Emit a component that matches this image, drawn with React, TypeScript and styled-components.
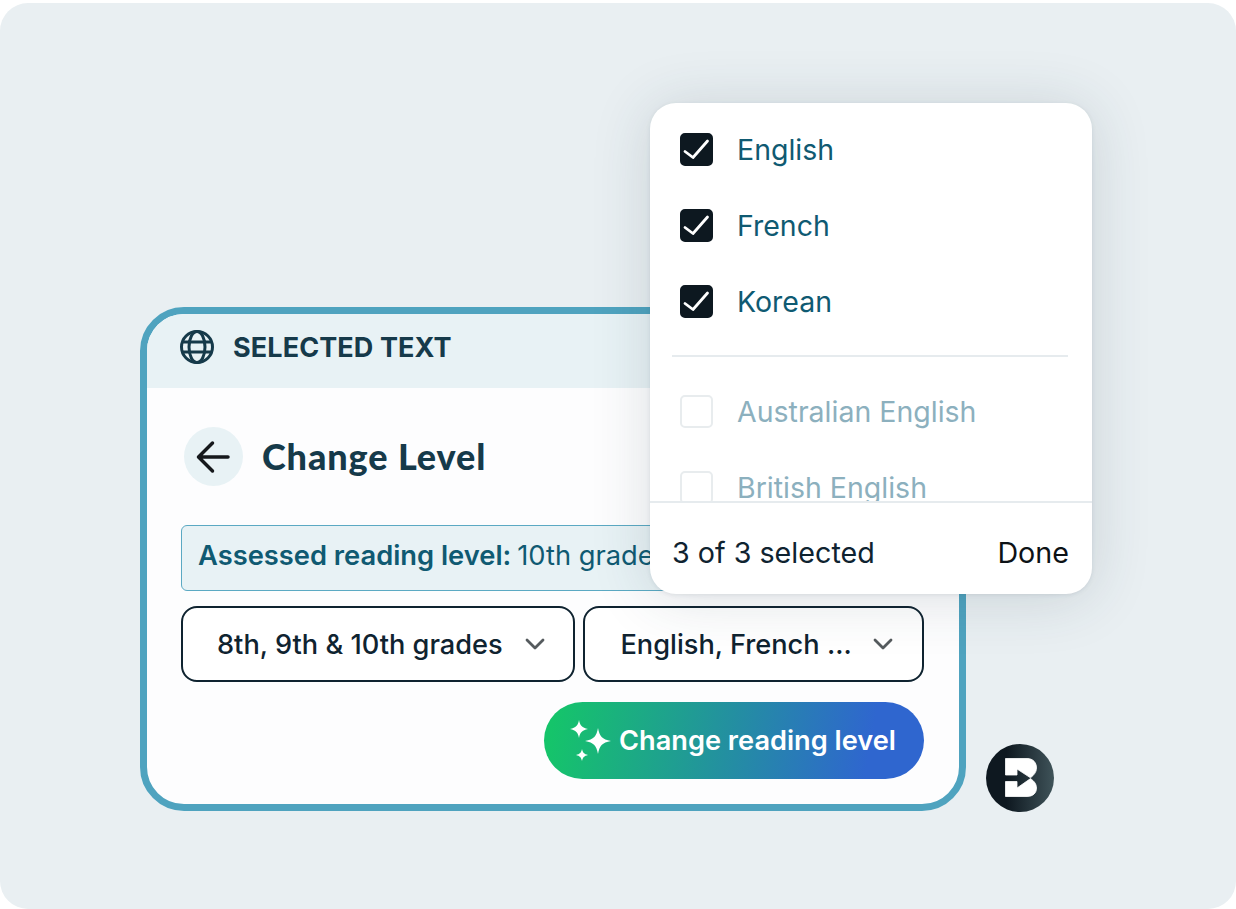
import { createGlobalStyle } from "styled-components";
import styled from "styled-components";

const GlobalStyle = createGlobalStyle`
  html, body {
    margin: 0;
    background: #fff;
  }

  body {
    font-family: Inter, "Liberation Sans", sans-serif;
  }
`;

const Page = styled.div`
  width: 1236px;
  height: 909px;
  overflow: hidden;
  padding-top: 3px;
  box-sizing: border-box;
`;

const Panel = styled.div`
  position: relative;
  height: 906px;
  background: #e9eff2;
  border-radius: 28px;
  padding: 304px 0 0 140px;
  box-sizing: border-box;
`;

const Card = styled.section`
  width: 826px;
  height: 504px;
  box-sizing: border-box;
  border: 7px solid #4fa3bf;
  border-radius: 44px;
  background: #fdfdfe;
  overflow: hidden;
`;

const CardHeader = styled.header`
  height: 74px;
  background: #e8f2f5;
  display: flex;
  align-items: center;
  gap: 18px;
  padding: 0 0 8px 32px;
  box-sizing: border-box;
  color: #163a4a;
`;

const HeaderTitle = styled.h2`
  margin: 0;
  font-size: 27px;
  font-weight: 700;
  letter-spacing: 0.1px;
`;

const CardBody = styled.div`
  padding: 39px 35px 0 34px;
`;

const TitleRow = styled.div`
  display: flex;
  align-items: center;
  gap: 19px;
  margin-left: 3px;
`;

const BackButton = styled.div`
  width: 59px;
  height: 59px;
  border-radius: 50%;
  background: #e8f2f5;
  display: flex;
  align-items: center;
  justify-content: center;
`;

const PageTitle = styled.h1`
  margin: 0 0 2px;
  font-family: Lato, sans-serif;
  font-size: 36px;
  font-weight: 900;
  letter-spacing: 0.9px;
  color: #163a4a;
`;

const Assessed = styled.div`
  margin-top: 39px;
  height: 66px;
  box-sizing: border-box;
  border: 1px solid #5ba9c3;
  border-radius: 6px;
  background: #e8f2f5;
  display: flex;
  align-items: center;
  padding: 0 0 5px 16px;
  font-size: 27.3px;
  color: #0f5a72;
  white-space: nowrap;
`;

const AssessedLabel = styled.strong`
  font-weight: 600;
  margin-right: 6px;
`;

const SelectRow = styled.div`
  display: flex;
  gap: 8px;
  margin-top: 15px;
`;

const Select = styled.div<{ $width: number; $left: number; $right: number }>`
  width: ${(p) => p.$width}px;
  height: 76px;
  box-sizing: border-box;
  border: 2px solid #0f2330;
  border-radius: 16px;
  background: #fff;
  display: flex;
  align-items: center;
  justify-content: space-between;
  padding: 0 ${(p) => p.$right}px 0 ${(p) => p.$left}px;
  font-size: 27.2px;
  font-weight: 500;
  color: #0f2330;
  white-space: nowrap;
`;

const ActionRow = styled.div`
  display: flex;
  justify-content: flex-end;
  margin-top: 20px;
`;

const ActionButton = styled.button`
  width: 380px;
  height: 77px;
  border: 0;
  border-radius: 39px;
  background: linear-gradient(100deg, #15c46a 3%, #2390a0 48%, #2f66cf 85%);
  display: flex;
  align-items: center;
  gap: 8px;
  padding: 0 0 0 26px;
  box-sizing: border-box;
  color: #fff;
  font-family: Inter, sans-serif;
  font-size: 27.2px;
  font-weight: 600;
`;

const Popup = styled.div`
  position: absolute;
  left: 650px;
  top: 100px;
  width: 442px;
  height: 491px;
  background: #fff;
  border-radius: 26px;
  box-shadow: 0 4px 60px rgba(40, 60, 75, 0.16), 0 1px 4px rgba(40, 60, 75, 0.1);
  display: flex;
  flex-direction: column;
  overflow: hidden;
`;

const OptionList = styled.div`
  height: 400px;
  overflow: hidden;
  padding: 21px 24px 0 30px;
  box-sizing: border-box;
  border-bottom: 2px solid #e6ebee;
  flex: none;
`;

const Option = styled.label<{ $muted?: boolean }>`
  display: flex;
  align-items: center;
  gap: 24px;
  height: 50px;
  margin-bottom: 26px;
  font-size: 28.5px;
  color: ${(p) => (p.$muted ? "#8cb0be" : "#0f5a72")};
`;

const Box = styled.span<{ $checked?: boolean }>`
  width: 33px;
  height: 33px;
  box-sizing: border-box;
  flex: none;
  border-radius: 5px;
  background: ${(p) => (p.$checked ? "#0d1820" : "#fff")};
  border: 2px solid ${(p) => (p.$checked ? "#0d1820" : "#e8ecee")};
  display: flex;
  align-items: center;
  justify-content: center;
`;

const Divider = styled.hr`
  border: 0;
  border-top: 2px solid #e6ebee;
  margin: 29px 0 29px -8px;
`;

const PopupFooter = styled.div`
  flex: 1;
  display: flex;
  align-items: center;
  justify-content: space-between;
  padding: 8px 23px 0 22px;
  font-size: 28.7px;
  color: #0f2330;
`;

const DoneLabel = styled.span`
  color: #0d1216;
`;

const Badge = styled.svg`
  position: absolute;
  left: 986px;
  top: 741px;
`;

function Sparkles() {
  return (
    <svg width="41" height="42" viewBox="0 0 41 42" fill="#fff">
      <path d="M9 0 C10 5.5 12 7.8 18 9 C12 10.2 10 12.5 9 18 C8 12.5 6 10.2 0 9 C6 7.8 8 5.5 9 0Z" />
      <path d="M28 8 C29.5 16 32 19.5 41 21 C32 22.5 29.5 26 28 34 C26.5 26 24 22.5 15 21 C24 19.5 26.5 16 28 8Z" />
      <path d="M12 29 C12.8 32.5 14 34 18 35 C14 36 12.8 37.5 12 41 C11.2 37.5 10 36 6 35 C10 34 11.2 32.5 12 29Z" />
    </svg>
  );
}

function Chevron() {
  return (
    <svg width="22" height="14" viewBox="0 0 22 14" fill="none" stroke="#555b5e" strokeWidth="2.8" strokeLinecap="round" strokeLinejoin="round">
      <path d="M3 3 L11 11 L19 3" />
    </svg>
  );
}

function Check() {
  return (
    <svg width="29" height="29" viewBox="0 0 29 29" fill="none" stroke="#fff" strokeWidth="2.8" strokeLinecap="round" strokeLinejoin="round">
      <path d="M3 16.5 L11 22.5 L25.5 6" />
    </svg>
  );
}

export default function App() {
  return (
    <Page>
      <GlobalStyle />
      <Panel>
        <Card>
          <CardHeader>
            <svg width="36" height="36" viewBox="0 0 36 36" fill="none" stroke="#163a4a" strokeWidth="3">
              <circle cx="18" cy="18" r="15.5" />
              <ellipse cx="18" cy="18" rx="8" ry="15.5" />
              <path d="M3.5 13 H32.5 M3.5 23 H32.5" />
            </svg>
            <HeaderTitle>SELECTED TEXT</HeaderTitle>
          </CardHeader>
          <CardBody>
            <TitleRow>
              <BackButton>
                <svg width="36" height="36" viewBox="0 0 36 36" fill="none" stroke="#16191c" strokeWidth="3.5" strokeLinecap="round" strokeLinejoin="round">
                  <path d="M32 18 H3 M16.5 4 L2.5 18 L16.5 32" />
                </svg>
              </BackButton>
              <PageTitle>Change Level</PageTitle>
            </TitleRow>
            <Assessed>
              <AssessedLabel>Assessed reading level:</AssessedLabel>
              10th grade
            </Assessed>
            <SelectRow>
              <Select $width={395} $left={34} $right={27}>
                8th, 9th &amp; 10th grades
                <Chevron />
              </Select>
              <Select $width={341} $left={35} $right={28}>
                English, French ...
                <Chevron />
              </Select>
            </SelectRow>
            <ActionRow>
              <ActionButton>
                <Sparkles />
                Change reading level
              </ActionButton>
            </ActionRow>
          </CardBody>
        </Card>
        <Popup>
          <OptionList>
            <Option><Box $checked><Check /></Box>English</Option>
            <Option><Box $checked><Check /></Box>French</Option>
            <Option><Box $checked><Check /></Box>Korean</Option>
            <Divider />
            <Option $muted><Box />Australian English</Option>
            <Option $muted><Box />British English</Option>
          </OptionList>
          <PopupFooter>
            <span>3 of 3 selected</span>
            <DoneLabel>Done</DoneLabel>
          </PopupFooter>
        </Popup>
        <Badge width="68" height="68" viewBox="0 0 68 68">
          <defs>
            <linearGradient id="badge" x1="0" y1="0" x2="1" y2="0">
              <stop offset="0.3" stopColor="#0e1820" />
              <stop offset="1" stopColor="#3f5359" />
            </linearGradient>
          </defs>
          <circle cx="34" cy="34" r="34" fill="url(#badge)" />
          <path fill="#fff" stroke="#fff" strokeWidth="0.8" strokeLinejoin="round" d="M19.5 14.5 H41 C47 14.5 50.5 18.5 50.5 24 C50.5 28 48 31 44.5 33.8 L31 25 V31 H19.5 Z M19.5 37.5 H31 V44 L44.5 34.6 C48 37 50.5 40 50.5 44 C50.5 49 47 52.5 41 52.5 H19.5 Z" />
        </Badge>
      </Panel>
    </Page>
  );
}
